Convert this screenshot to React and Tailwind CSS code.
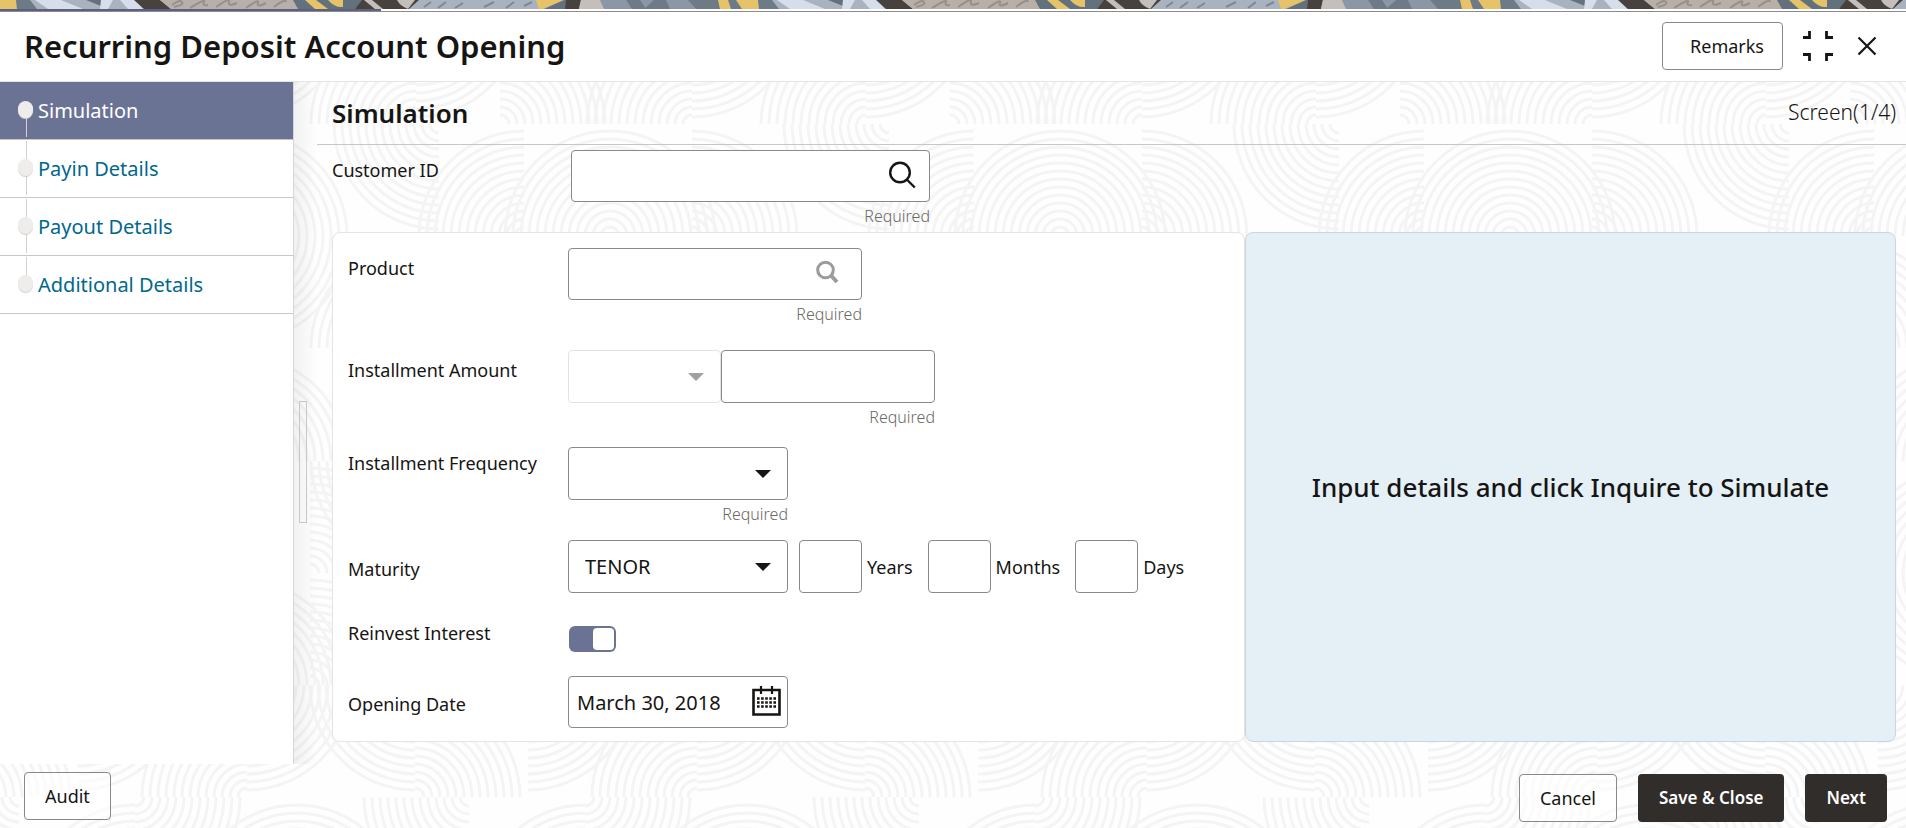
import React, { useState } from 'react';

const steps = ['Simulation', 'Payin Details', 'Payout Details', 'Additional Details'];

const radii = [9, 17, 25, 33, 41, 49, 57, 65, 73, 81, 89, 97, 105];

// quarter rings around a center, opening towards one corner
const Rings = ({ cx, cy, dir, from = 0 }) => {
  const sx = dir.includes('l') ? -1 : 1;
  const sy = dir.includes('t') ? -1 : 1;
  const sweep = sx * sy > 0 ? 1 : 0;
  return (
    <path
      d={radii
        .filter((r) => r >= from)
        .map((r) => `M${cx + sx * r} ${cy}A${r} ${r} 0 0 ${sweep} ${cx} ${cy + sy * r}`)
        .join('')}
    />
  );
};

const patternRings = [
  [-61, 124, 'bl'], [389, 124, 'bl'],
  [0, 124, 'tr'], [192, 124, 'tl'], [192, 12, 'br', 40], [366, 124, 'tl'], [366, 12, 'br', 40], [-84, 12, 'br', 40],
  [24, 236, 'tl'], [110, 236, 'tl'], [110, 236, 'tr'], [192, 236, 'tr'], [474, 236, 'tl'],
  [0, 348, 'tr'], [192, 348, 'tl'], [192, 236, 'br', 40], [366, 348, 'tl'], [366, 236, 'br', 40], [-84, 236, 'br', 40],
  [24, 461, 'tl'], [110, 461, 'tl'], [110, 461, 'tr'], [192, 461, 'tr'], [389, 348, 'bl'], [474, 461, 'tl'],
  [110, 573, 'tl'], [110, 461, 'br'], [260, 573, 'tr'], [366, 461, 'bl'], [366, 573, 'tr'], [-84, 573, 'tr'],
  [24, 685, 'tl'], [110, 573, 'bl'], [192, 685, 'tr'], [260, 685, 'tr'], [474, 685, 'tl'], [365, 573, 'br'], [-85, 573, 'br'],
  [-85, 685, 'bl'], [365, 685, 'bl'], [-85, 797, 'tr'], [365, 797, 'tr'],
  [28, 685, 'br', 25], [197, 797, 'tl'], [197, 685, 'br', 25],
  [-31, 797, 'bl'], [419, 797, 'bl'], [85, 797, 'br'], [85, 910, 'tl'], [247, 910, 'tl'], [247, 910, 'tr'],
];

const Backdrop = () => (
  <svg className="absolute inset-0 -z-10 h-full w-full" aria-hidden="true">
    <defs>
      <pattern id="rings" x="50" y="0" width="450" height="911" patternUnits="userSpaceOnUse">
        <g fill="none" stroke="#f4f4f4" strokeWidth="3">
          {patternRings.map(([cx, cy, dir, from], idx) => (
            <Rings key={idx} cx={cx} cy={cy} dir={dir} from={from} />
          ))}
        </g>
      </pattern>
    </defs>
    <rect width="100%" height="100%" fill="url(#rings)" />
  </svg>
);

const Banner = () => (
  <svg className="block h-[9px] w-full" aria-hidden="true">
    <defs>
      <pattern id="banner" width="742" height="9" patternUnits="userSpaceOnUse">
        <rect width="742" height="9" fill="#a9b2bf" />
        <path d="M0 0h16l1 9H0z" fill="#e6c368" />
        <path d="M16 0h14l7 9H17z" fill="#6d7b86" />
        <path d="M35 0h26l22 9H48z" fill="#d6deec" />
        <path d="M86 0h15v6z" fill="#62717c" />
        <path d="M101 0h12l-5 9h-8z" fill="#d6deec" />
        <path d="M120 0h15l8 9h-15z" fill="#d6deec" />
        <path d="M134 0h26l11 9h-27z" fill="#47423e" />
        <path d="M160 0h135l5 9H171z" fill="#b8b0a8" />
        <path
          d="M172 5q8-6 10-3t-8 5M190 8q16-10 14-6t4 3M216 7q14-10 13-5t8 1M246 8q14-10 12-5t8 0M274 7q12-9 12-5"
          fill="none"
          stroke="#97908a"
          strokeWidth="2"
        />
        <path d="M293 0h72l-10 9h-57z" fill="#62717c" />
        <path d="M305 0h11l12 9h-13z" fill="#e6c368" />
        <path d="M328 0h15v7q-8 1-15-7z" fill="#e6c368" />
        <path d="M362 0h57l-10 9h-54z" fill="#47423e" />
        <path d="M364 0h8l11 9h-8zM397 0h18l-7 9q-8-3-11-9z" fill="#c4bfba" />
        <path
          d="M424 7l7-5M438 8l8-6M455 8l8-5M484 7l10-5M506 8l8-6M524 6l8-4"
          stroke="#7d8895"
          strokeWidth="2"
        />
        <path d="M536 0h28l-22 9h-3z" fill="#e6c368" />
        <path d="M564 0h4v9h-24z" fill="#62717c" />
        <path d="M566 0h15l-2 9h-14z" fill="#47423e" />
        <path d="M581 0h19l4 9h-25z" fill="#c4bfba" />
        <path d="M600 0h110l8 9H604z" fill="#8b97a7" />
        <path d="M626 0h14l6 9h-14zM654 0h12l4 9h-26z" fill="#6d7b86" />
        <path d="M688 0h54v9h-46z" fill="#6d7b86" />
        <path d="M718 0h10l3 9h-11zM736 0h6v9z" fill="#e6c368" />
      </pattern>
    </defs>
    <rect width="100%" height="9" fill="url(#banner)" />
  </svg>
);

const Caret = ({ className }) => (
  <svg viewBox="0 0 16 8" className={`pointer-events-none absolute top-1/2 right-[17px] -mt-1 h-2 w-4 ${className}`} aria-hidden="true">
    <path d="M0 0h16L8 8z" fill="currentColor" />
  </svg>
);

const Select = ({ id, label, options, disabled, className }) => (
  <div className={`relative h-[53px] ${className}`}>
    <select
      id={id}
      aria-label={label}
      disabled={disabled}
      className="h-full w-full appearance-none rounded border border-[#8b8886] bg-white px-4 text-xl disabled:border-[#e4e3e2]"
    >
      {options.map((option) => (
        <option key={option}>{option}</option>
      ))}
    </select>
    <Caret className={disabled ? 'text-[#a3a1a0]' : 'text-[#161513]'} />
  </div>
);

const Label = ({ htmlFor, className = '', children }) => (
  <label htmlFor={htmlFor} className={`w-[220px] shrink-0 text-lg leading-6 ${className}`}>
    {children}
  </label>
);

const Required = () => <p className="pt-0.5 text-right text-base leading-6 font-light text-[#6b6865]">Required</p>;

const box = 'rounded border border-[#8b8886] bg-white';
const lightButton = 'h-12 rounded border border-[#8b8886] bg-white/60 text-lg';
const darkButton = 'h-12 rounded bg-[#312d2a] px-[21px] text-[17px] font-semibold text-white';

const App = () => {
  const [reinvest, setReinvest] = useState(true);

  return (
    <div className="relative isolate flex min-h-screen flex-col bg-[#fefefe] font-['Noto_Sans','Open_Sans',sans-serif] text-[#161513]">
      <Backdrop />
      <Banner />
      <div className="border-b border-[#8b8b8b] bg-white">
        <div className="h-0.5 w-1/5 bg-[#5c5f86]" />
      </div>

      <header className="flex h-[70px] items-center border-b border-[#e4e4e4] bg-white pr-[29px] pb-0.5 pl-6">
        <h1 className="grow text-[31px] leading-10 font-semibold">Recurring Deposit Account Opening</h1>
        <button className={`${lightButton} pr-[18px] pl-[27px]`}>Remarks</button>
        <button aria-label="Exit full screen" className="ml-5">
          <svg viewBox="0 0 30 30" className="h-[30px] w-[30px]" fill="none" stroke="#161513" strokeWidth="2.800">
            <path d="M0 6.500h6.500V0M23.500 0v6.500H30M0 23.500h6.500V30M30 23.500h-6.500V30" />
          </svg>
        </button>
        <button aria-label="Close" className="ml-6">
          <svg viewBox="0 0 20 20" className="h-5 w-5" fill="none" stroke="#161513" strokeWidth="2.200">
            <path d="M1.500 1.500l17 17M18.500 1.500l-17 17" />
          </svg>
        </button>
      </header>

      <div className="flex grow">
        <nav className="w-[294px] shrink-0 border-r border-[#d0d9e0] bg-white">
          <ul>
            {steps.map((step, idx) => (
              <li
                key={step}
                className={`relative flex h-[58px] items-center border-b border-[#c9c7c3] pl-[18px] ${idx === 0 ? 'bg-[#6b7394]' : ''}`}
              >
                <span
                  className={`absolute left-[26px] w-px bg-[#d4d2d0] ${idx === 0 ? 'top-7 bottom-0.5' : idx === 3 ? 'top-px bottom-7' : 'top-px bottom-0.5'}`}
                />
                <span className="relative mb-0.5 h-[17px] w-[15px] rounded-full bg-[#eeedec] shadow-[0_1px_0_#d4d2d0]" />
                <a
                  href="#"
                  className={`ml-[5px] text-xl ${idx === 0 ? 'text-white' : 'text-[#00688c]'}`}
                >
                  {step}
                </a>
              </li>
            ))}
          </ul>
        </nav>

        <div className="w-[23px] shrink-0 bg-linear-to-r from-black/5 to-transparent">
          <div className="mt-[319px] ml-[5px] h-[122px] w-2 border border-[#c8c8c8]" />
        </div>

        <main className="min-w-0 grow">
          <div className="flex h-[63px] items-center justify-between border-b border-[#c9c7c5] pr-2.5 pl-[15px]">
            <h2 className="text-[26px] font-semibold">Simulation</h2>
            <span className="text-[21px] font-light">Screen(1/4)</span>
          </div>

          <div className="flex pt-[5px] pl-[15px]">
            <Label htmlFor="customer" className="mr-[19px] pt-2">Customer ID</Label>
            <div className="w-[359px]">
              <div className="relative">
                <input id="customer" type="text" className={`h-[52px] w-full px-4 text-xl ${box}`} />
                <button aria-label="Search customer" className="absolute top-[11px] right-3.5">
                  <svg viewBox="0 0 28 28" className="h-7 w-7" fill="none" stroke="#161513" strokeWidth="2.400">
                    <circle cx="12" cy="11.500" r="9.800" />
                    <path d="M18.800 18.500l8 8" />
                  </svg>
                </button>
              </div>
              <Required />
            </div>
          </div>

          <div className="mt-1 mr-2.5 mb-[22px] ml-[15px] flex">
            <section className="w-[913px] rounded-lg border border-[#e4e4e4] bg-white px-[15px] pt-[15px] pb-[13px]">
              <div className="flex pb-6">
                <Label htmlFor="product" className="pt-2">Product</Label>
                <div className="w-[294px]">
                  <div className="relative">
                    <input id="product" type="text" className={`h-[52px] w-full px-4 text-xl ${box}`} />
                    <button aria-label="Search product" className="absolute top-3 right-[23px]">
                      <svg viewBox="0 0 24 24" className="h-6 w-6" fill="none" stroke="#9b9b9b" strokeWidth="3">
                        <circle cx="10.500" cy="10" r="7.800" />
                        <path d="M16 15.500l6 6.500" strokeWidth="4" />
                      </svg>
                    </button>
                  </div>
                  <Required />
                </div>
              </div>

              <div className="flex pb-[18px]">
                <Label htmlFor="amount" className="pt-2">Installment Amount</Label>
                <div>
                  <div className="flex">
                    <Select id="currency" label="Currency" options={['']} disabled className="w-[153px]" />
                    <input id="amount" type="text" className={`h-[53px] w-[214px] px-4 text-xl ${box}`} />
                  </div>
                  <Required />
                </div>
              </div>

              <div className="flex pb-3.5">
                <Label htmlFor="frequency" className="pt-1">Installment Frequency</Label>
                <div className="w-[220px]">
                  <Select id="frequency" label="Installment Frequency" options={['']} className="w-full" />
                  <Required />
                </div>
              </div>

              <div className="flex items-center">
                <Label htmlFor="maturity" className="pt-1">Maturity</Label>
                <Select id="maturity" label="Maturity" options={['TENOR']} className="w-[220px]" />
                {['Years', 'Months', 'Days'].map((unit, idx) => (
                  <label key={unit} className={`flex items-center text-lg ${idx === 0 ? 'ml-[11px]' : 'ml-[15px]'}`}>
                    <input type="text" className={`mr-[5px] h-[53px] w-[63px] px-2 ${box}`} />
                    {unit}
                  </label>
                ))}
              </div>

              <div className="flex items-start py-6">
                <Label htmlFor="reinvest" className="pt-1">Reinvest Interest</Label>
                <span className="relative mt-[9px] ml-px flex h-[26px] w-[47px]">
                  <input
                    id="reinvest"
                    type="checkbox"
                    checked={reinvest}
                    onChange={(e) => setReinvest(e.target.checked)}
                    className="peer h-full w-full appearance-none rounded-md bg-[#a3a1a0] checked:bg-[#6b7394]"
                  />
                  <span className="pointer-events-none absolute top-0.5 left-0.5 h-[22px] w-[21px] rounded bg-white peer-checked:right-0.5 peer-checked:left-auto" />
                </span>
              </div>

              <div className="flex items-center">
                <Label htmlFor="opening" className="pt-1">Opening Date</Label>
                <div className="relative w-[220px]">
                  <input id="opening" type="text" defaultValue="March 30, 2018" className={`h-[52px] w-full px-2 text-xl ${box}`} />
                  <button aria-label="Choose date" className="absolute top-2.5 right-[7px]">
                    <svg viewBox="0 0 29 30" className="h-[30px] w-[29px]" fill="none" stroke="#161513">
                      <path d="M1.500 4h26v24.500h-26z" strokeWidth="2.600" />
                      <path d="M9 0v8M20 0v8" strokeWidth="2.200" />
                      <path d="M5 12.500h19M5 16.500h19M5 20.500h19" strokeWidth="2.600" strokeDasharray="2.600 1.500" />
                    </svg>
                  </button>
                </div>
              </div>
            </section>

            <section className="flex grow items-center justify-center rounded-lg border border-[#c5d7e0] bg-[#e4f0f6]">
              <p className="text-[26px] font-medium">Input details and click Inquire to Simulate</p>
            </section>
          </div>
        </main>
      </div>

      <footer className="flex h-[65px] items-center pt-0.5 pr-[19px] pl-6">
        <button className={`${lightButton} mb-1 px-5`}>Audit</button>
        <div className="ml-auto flex gap-[21px]">
          <button className={`${lightButton} px-5`}>Cancel</button>
          <button className={darkButton}>Save &amp; Close</button>
          <button className={darkButton}>Next</button>
        </div>
      </footer>
    </div>
  );
};

export default App;
